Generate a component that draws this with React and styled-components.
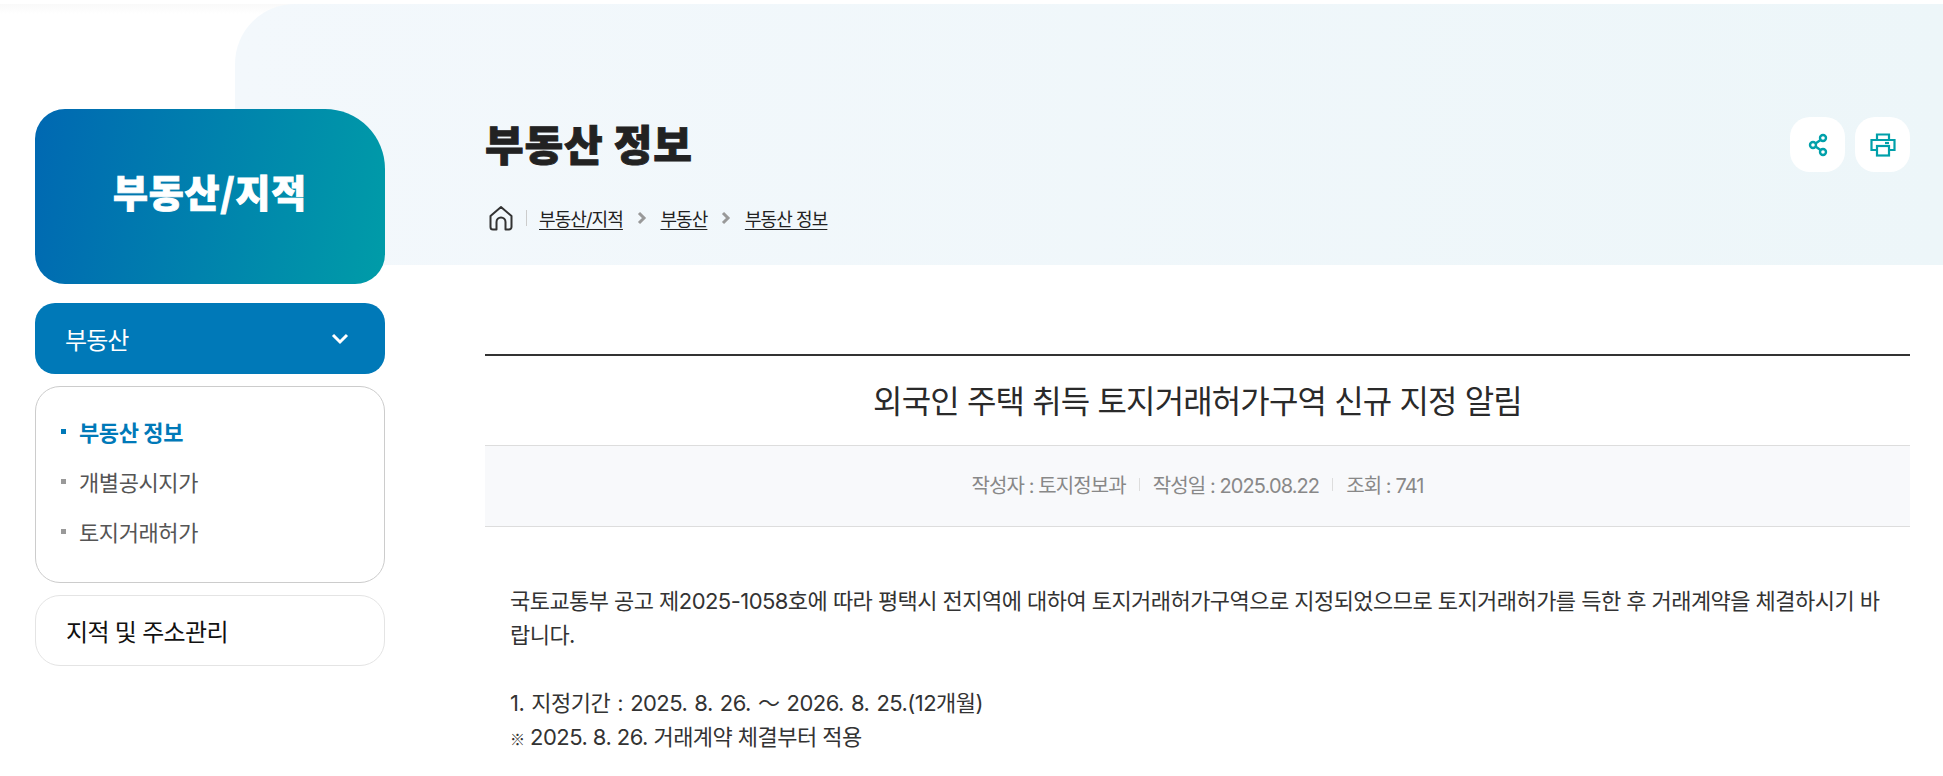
import React from "react";
import styled, { createGlobalStyle } from "styled-components";

const Global = createGlobalStyle`
  html, body { margin: 0; padding: 0; background: #fff; }
  body { font-family: Inter, "Noto Sans CJK KR", "Noto Sans", sans-serif; color: #222; overflow: hidden; }
  * { box-sizing: border-box; }
`;
const Page = styled.div`
  position: relative; width: 1943px; height: 776px; overflow: hidden; display: flex; align-items: flex-start;
  padding: 109px 33px 0 35px;
  background: linear-gradient(#fff 4px, #f9f9f9 4px, #fff 14px);
`;
const Backdrop = styled.div`
  position: absolute; left: 235px; right: 0; top: 4px; height: 261px;
  background: linear-gradient(90deg, #f3f8fc, #edf6f9); border-top-left-radius: 60px;
`;
const Sidebar = styled.aside`
  position: relative; width: 350px; flex: none; display: flex; flex-direction: column;
`;
const Hero = styled.div`
  height: 175px; padding-bottom: 12px; border-radius: 30px 60px 30px 30px; display: flex; align-items: center; justify-content: center;
  background: linear-gradient(100deg, #0068b2 0%, #009ca8 100%);
  color: #fff; font-family: "Noto Sans CJK KR", sans-serif; font-size: 38px; font-weight: 900; letter-spacing: 0.8px; line-height: 1;
  -webkit-text-stroke: 0.9px #fff;
`;
const MenuHead = styled.div`
  height: 71px; margin-top: 19px; border-radius: 20px; background: #0079b8; color: #fff; display: flex; align-items: center;
  justify-content: space-between; padding: 0 36px 0 30px; font-size: 24px; letter-spacing: -0.9px; font-weight: 400;
`;
const SubList = styled.ul`
  list-style: none; margin: 12px 0 0; padding: 19px 0 20px 25px; height: 197px; border: 1px solid #ccc; border-radius: 25px;
  display: flex; flex-direction: column; justify-content: flex-start;
`;
const SubItem = styled.li`
  height: 50px; flex: none; display: flex; align-items: center; gap: 13px; font-size: 22px; letter-spacing: -0.4px;
  color: ${p => (p.$active ? "#0079b8" : "#555")}; font-weight: ${p => (p.$active ? 700 : 400)};
  &::before { content: ""; width: 5px; height: 5px; flex: none; background: ${p => (p.$active ? "#0079b8" : "#999")}; }
`;
const MenuRow = styled.div`
  height: 71px; margin-top: 12px; border: 1px solid #e4e4e4; border-radius: 25px; display: flex; align-items: center;
  padding-left: 30px; font-size: 24px; font-weight: 400; letter-spacing: -0.7px; color: #111;
`;
const Main = styled.main`
  position: relative; margin-left: 100px; width: 1425px; flex: none;
`;
const TitleBar = styled.div`
  display: flex; justify-content: space-between; align-items: flex-start; height: 62px;
`;
const PageTitle = styled.h1`
  margin: 0; padding-top: 9px; font-family: "Noto Sans CJK KR", sans-serif; font-size: 42px; line-height: 1.2; font-weight: 900; letter-spacing: 0.8px; color: #222;
  -webkit-text-stroke: 0.9px #222;
`;
const Actions = styled.div`
  display: flex; gap: 10px; margin-top: 8px;
`;
const ActionBtn = styled.button`
  width: 55px; height: 55px; border: 0; border-radius: 20px; background: #fff; display: flex; align-items: center; justify-content: center; padding: 0;
`;
const Crumbs = styled.nav`
  display: flex; align-items: center; margin-top: 32px; height: 30px; padding-left: 3px; font-size: 18px; letter-spacing: -0.9px; color: #222;
`;
const HomeIcon = styled.svg`
  width: 26px; height: 26px; flex: none;
`;
const CrumbSep = styled.span`
  width: 1px; height: 16px; background: #ccc; margin: 0 12px 0 12px;
`;
const Crumb = styled.a`
  text-decoration: underline; text-underline-offset: 3px; color: #222;
`;
const Chevron = styled.svg`
  width: 12px; height: 14px; margin: 0 12.500px 0 13px; flex: none;
`;
const Article = styled.article`
  margin-top: 121px; border-top: 2px solid #333;
`;
const ArticleTitle = styled.h2`
  margin: 0; height: 90px; padding-bottom: 4px; display: flex; align-items: center; justify-content: center; font-size: 32px; font-weight: 400; letter-spacing: -0.87px;
  color: #2a2a2a; border-bottom: 1px solid #ddd;
`;
const Meta = styled.div`
  height: 81px; padding-bottom: 4px; background: #f8f9fb; border-bottom: 1px solid #ddd; display: flex; align-items: center; justify-content: center;
  font-size: 20px; letter-spacing: -0.9px; color: #888;
`;
const MetaSep = styled.span`
  width: 1px; height: 13px; background: #ddd; margin: 0 13px;
`;
const Body = styled.div`
  padding: 57px 25px 0; font-size: 22px; line-height: 34px; letter-spacing: -0.55px; color: #333;
`;
const Para = styled.p`
  margin: 0; min-height: 34px; word-spacing: ${p => (p.$wide ? "1.5px" : "0")};
`;
const Mark = styled.span`
  font-family: "Noto Sans CJK KR", sans-serif; font-weight: 400; font-size: 15px;
`;

const Chev = () => (
  <Chevron viewBox="0 0 12 14"><path d="M3 2l5 5-5 5" fill="none" stroke="#999" strokeWidth="3" /></Chevron>
);

export default function App() {
  return (
    <>
      <Global />
      <Page>
        <Backdrop />
        <Sidebar>
          <Hero>부동산/지적</Hero>
          <MenuHead>
            부동산
            <svg width="18" height="12" viewBox="0 0 18 12"><path d="M2 2l7 7 7-7" fill="none" stroke="#fff" strokeWidth="3" /></svg>
          </MenuHead>
          <SubList>
            <SubItem $active>부동산 정보</SubItem>
            <SubItem>개별공시지가</SubItem>
            <SubItem>토지거래허가</SubItem>
          </SubList>
          <MenuRow>지적 및 주소관리</MenuRow>
        </Sidebar>
        <Main>
          <TitleBar>
            <PageTitle>부동산 정보</PageTitle>
            <Actions>
              <ActionBtn aria-label="공유">
                <svg width="24" height="24" viewBox="0 0 24 24" fill="none" stroke="#00a0aa" strokeWidth="2.4">
                  <circle cx="17" cy="5" r="3" /><circle cx="7" cy="12" r="3" /><circle cx="17" cy="19" r="3" />
                  <path d="M9.500 10.500l5-3.500M9.500 13.500l5 3.500" />
                </svg>
              </ActionBtn>
              <ActionBtn aria-label="인쇄">
                <svg width="26" height="24" viewBox="0 0 26 24" fill="none" stroke="#00a0aa" strokeWidth="2.2">
                  <path d="M7 7V1.500h12V7" /><path d="M7 17H1.500V7h23v10H19" /><rect x="7" y="13" width="12" height="9.500" />
                  <path d="M15 10h4" />
                </svg>
              </ActionBtn>
            </Actions>
          </TitleBar>
          <Crumbs>
            <HomeIcon viewBox="0 0 26 26" fill="none" stroke="#333" strokeWidth="2">
              <path d="M2.500 11L13 2l10.500 9v11a2.500 2.500 0 0 1-2.500 2.500h-3.500V17a4.500 4.500 0 0 0-9 0v7.500H5A2.500 2.500 0 0 1 2.500 22z" strokeLinejoin="round" />
            </HomeIcon>
            <CrumbSep />
            <Crumb>부동산/지적</Crumb>
            <Chev />
            <Crumb>부동산</Crumb>
            <Chev />
            <Crumb>부동산 정보</Crumb>
          </Crumbs>
          <Article>
            <ArticleTitle>외국인 주택 취득 토지거래허가구역 신규 지정 알림</ArticleTitle>
            <Meta>
              작성자 : 토지정보과<MetaSep />작성일 : 2025.08.22<MetaSep />조회 : 741
            </Meta>
            <Body>
              <Para>국토교통부 공고 제2025-1058호에 따라 평택시 전지역에 대하여 토지거래허가구역으로 지정되었으므로 토지거래허가를 득한 후 거래계약을 체결하시기 바랍니다.</Para>
              <Para />
              <Para $wide>1. 지정기간 : 2025. 8. 26. 〜 2026. 8. 25.(12개월)</Para>
              <Para><Mark>※</Mark> 2025. 8. 26. 거래계약 체결부터 적용</Para>
            </Body>
          </Article>
        </Main>
      </Page>
    </>
  );
}
